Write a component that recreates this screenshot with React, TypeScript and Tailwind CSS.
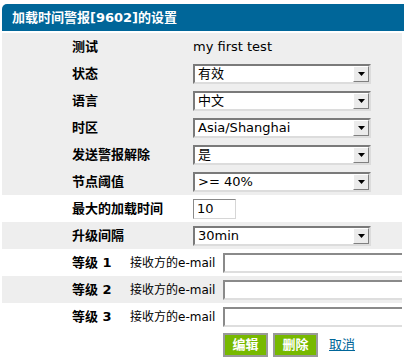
import React from 'react';

const font = { fontFamily: '"DejaVu Sans", "Noto Sans CJK SC", sans-serif' };

const FakeSelect = ({ value }: { value: string }) => (
    <div className="w-[178px] h-[20px] flex bg-white border-2 border-t-[#7a7a7a] border-l-[#7a7a7a] border-b-[#dcdcdc] border-r-[#dcdcdc]">
        <div className="flex-1 flex items-center pl-[3px] text-[13px] text-black leading-none">{value}</div>
        <div className="w-[16px] h-full flex items-center justify-center bg-[#ebebeb] border border-t-white border-l-white border-b-[#808080] border-r-[#808080]">
            <svg width="7" height="4" viewBox="0 0 7 4">
                <path d="M0 0 H7 L3.5 4 Z" fill="#000" />
            </svg>
        </div>
    </div>
);

const Row = ({ label, gray, children }: { label: string; gray?: boolean; children: React.ReactNode }) => (
    <div className={`h-[27px] flex items-center pl-[70px] ${gray ? 'bg-[#eeeeee]' : 'bg-white'}`}>
        <div className="w-[121px] shrink-0 text-[13px] font-bold text-black">{label}</div>
        {children}
    </div>
);

const LevelRow = ({ n, gray }: { n: number; gray?: boolean }) => (
    <div className={`h-[27px] flex items-center pl-[70px] overflow-hidden ${gray ? 'bg-[#eeeeee]' : 'bg-white'}`}>
        <div className="w-[58px] shrink-0 text-[13px] font-bold text-black whitespace-nowrap">等级 {n}</div>
        <div className="w-[93px] shrink-0 text-[12px] text-black whitespace-nowrap">接收方的e-mail</div>
        <div className="w-[200px] shrink-0 h-[20px] bg-white border-2 border-t-[#8a8a8a] border-l-[#8a8a8a] border-b-[#dedede] border-r-[#dedede]" />
    </div>
);

export default function App() {
    const selects: [string, string][] = [
        ['状态', '有效'],
        ['语言', '中文'],
        ['时区', 'Asia/Shanghai'],
        ['发送警报解除', '是'],
        ['节点阈值', '>= 40%'],
    ];

    return (
        <div className="w-[404px] h-[363px] bg-white overflow-hidden pt-[4px]" style={font}>
            <div className="ml-[2px] h-[27px] bg-[#006699] rounded-tl-[5px] flex items-center pl-[10px]">
                <span className="text-[13px] font-bold text-white">加载时间警报[9602]的设置</span>
            </div>
            <div className="mx-[2px] mt-[2px]">
                <Row label="测试" gray>
                    <span className="text-[13px] text-black">my first test</span>
                </Row>
                {selects.map(([l, v]) => (
                    <Row key={l} label={l} gray>
                        <FakeSelect value={v} />
                    </Row>
                ))}
                <Row label="最大的加载时间">
                    <div className="w-[43px] h-[20px] flex items-center pl-[3px] text-[13px] bg-white border border-t-[#8a8a8a] border-l-[#8a8a8a] border-b-[#d6d6d6] border-r-[#d6d6d6]">10</div>
                </Row>
                <Row label="升级间隔" gray>
                    <FakeSelect value="30min" />
                </Row>
                <LevelRow n={1} />
                <LevelRow n={2} gray />
                <LevelRow n={3} />
                <div className="h-[30px] flex items-center pl-[221px] gap-[5px]">
                    <button className="w-[45px] h-[24px] bg-[#77b900] border-2 border-[#999999] text-white text-[13px] font-bold">编辑</button>
                    <button className="w-[45px] h-[24px] bg-[#77b900] border-2 border-[#999999] text-white text-[13px] font-bold">删除</button>
                    <a className="ml-[6px] text-[13px] text-[#006699] underline">取消</a>
                </div>
            </div>
        </div>
    );
}
